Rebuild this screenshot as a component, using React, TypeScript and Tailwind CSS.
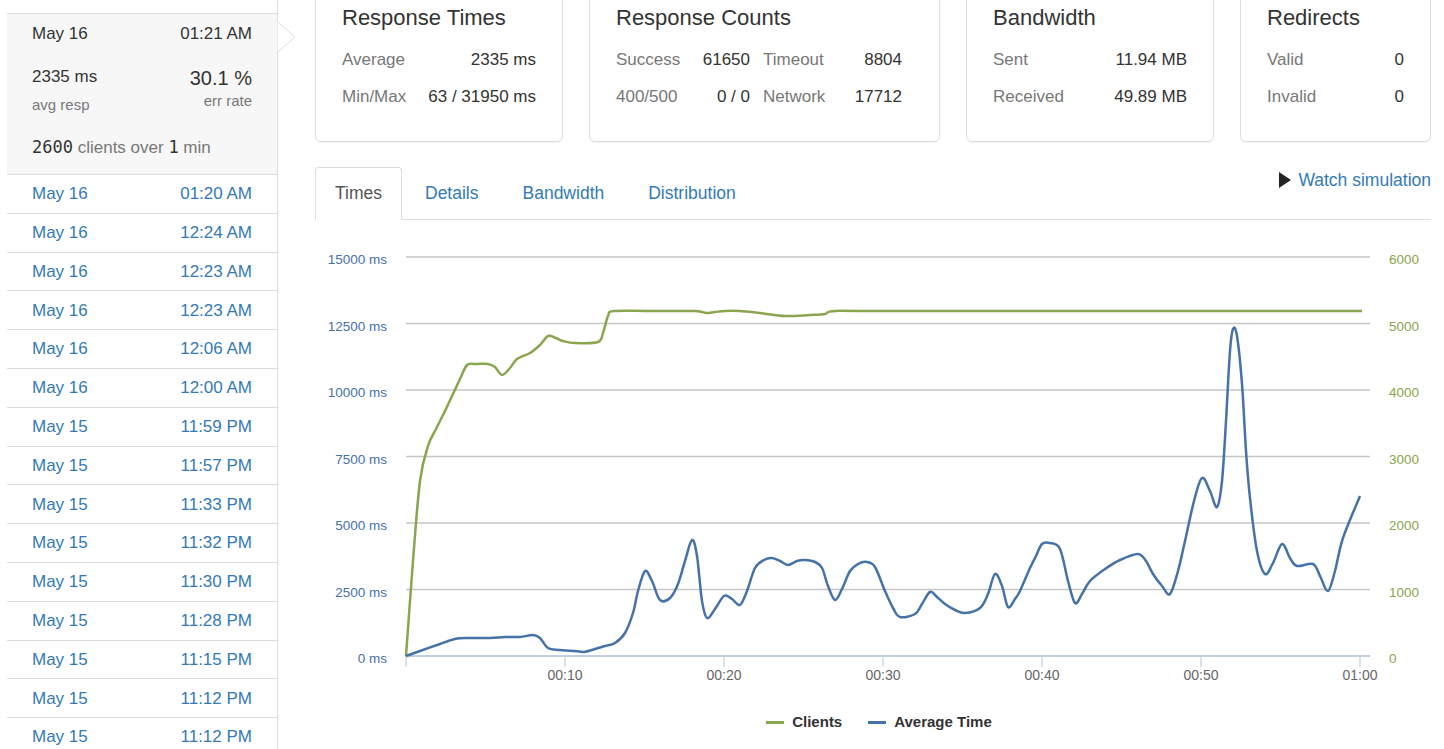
const runs = [
  ["May 16", "01:20 AM"],
  ["May 16", "12:24 AM"],
  ["May 16", "12:23 AM"],
  ["May 16", "12:23 AM"],
  ["May 16", "12:06 AM"],
  ["May 16", "12:00 AM"],
  ["May 15", "11:59 PM"],
  ["May 15", "11:57 PM"],
  ["May 15", "11:33 PM"],
  ["May 15", "11:32 PM"],
  ["May 15", "11:30 PM"],
  ["May 15", "11:28 PM"],
  ["May 15", "11:15 PM"],
  ["May 15", "11:12 PM"],
  ["May 15", "11:12 PM"],
];

const clients: [number, number][] = [
  [406, 655], [413, 560], [420, 480], [428, 445], [436, 428], [445, 410], [453, 393], [460, 378],
  [467, 364], [475, 363], [488, 363], [495, 366], [502, 374], [510, 367], [517, 358], [530, 352],
  [540, 344], [548, 335], [556, 337], [563, 340], [575, 342], [598, 341], [603, 332], [608, 315],
  [614, 310], [650, 310], [695, 310], [706, 312], [715, 311], [725, 310], [740, 310], [760, 312],
  [785, 315], [810, 314], [825, 313], [836, 310], [900, 310], [1362, 310],
];

const avgTime: [number, number][] = [
  [406, 655], [420, 650], [440, 643], [455, 638], [470, 637], [490, 637], [505, 636], [520, 636],
  [533, 634], [540, 637], [548, 647], [560, 649], [575, 650], [584, 651], [595, 648], [605, 645],
  [615, 642], [625, 632], [633, 612], [638, 590], [645, 570], [652, 580], [660, 599], [670, 597],
  [678, 583], [685, 560], [692, 539], [697, 555], [702, 600], [707, 617], [715, 608], [724, 595],
  [732, 598], [740, 604], [747, 590], [755, 567], [764, 559], [772, 557], [780, 560], [788, 564],
  [797, 560], [805, 559], [815, 561], [822, 567], [828, 585], [835, 599], [842, 588], [850, 570],
  [858, 563], [867, 561], [875, 566], [885, 590], [893, 607], [900, 616], [915, 613], [922, 603],
  [930, 591], [937, 596], [945, 603], [955, 609], [965, 612], [980, 607], [988, 593], [995, 573],
  [1002, 585], [1008, 606], [1015, 598], [1020, 590], [1030, 567], [1036, 555], [1042, 543],
  [1050, 542], [1060, 548], [1068, 580], [1075, 602], [1082, 593], [1090, 580], [1105, 568],
  [1120, 559], [1138, 553], [1146, 560], [1153, 573], [1162, 585], [1170, 593], [1178, 570],
  [1185, 540], [1194, 500], [1202, 477], [1210, 490], [1217, 506], [1222, 480], [1226, 420],
  [1230, 350], [1233, 328], [1237, 335], [1242, 383], [1246, 450], [1250, 497], [1257, 550],
  [1265, 573], [1273, 562], [1282, 543], [1290, 557], [1297, 565], [1313, 563], [1320, 575],
  [1328, 590], [1335, 570], [1343, 537], [1360, 495],
];

// catmull-rom -> cubic bezier
function smooth(pts: [number, number][]) {
  let d = `M${pts[0][0]},${pts[0][1]}`;
  for (let i = 0; i < pts.length - 1; i++) {
    const p0 = pts[i - 1] || pts[i];
    const p1 = pts[i];
    const p2 = pts[i + 1];
    const p3 = pts[i + 2] || p2;
    const c1x = p1[0] + (p2[0] - p0[0]) / 6;
    const c1y = p1[1] + (p2[1] - p0[1]) / 6;
    const c2x = p2[0] - (p3[0] - p1[0]) / 6;
    const c2y = p2[1] - (p3[1] - p1[1]) / 6;
    d += ` C${c1x.toFixed(1)},${c1y.toFixed(1)} ${c2x.toFixed(1)},${c2y.toFixed(1)} ${p2[0]},${p2[1]}`;
  }
  return d;
}

const yTicks = [
  { ms: "15000 ms", n: "6000", y: 256 },
  { ms: "12500 ms", n: "5000", y: 322.5 },
  { ms: "10000 ms", n: "4000", y: 389 },
  { ms: "7500 ms", n: "3000", y: 455.5 },
  { ms: "5000 ms", n: "2000", y: 522 },
  { ms: "2500 ms", n: "1000", y: 588.5 },
  { ms: "0 ms", n: "0", y: 655 },
];

const xTicks = ["", "00:10", "00:20", "00:30", "00:40", "00:50", "01:00"];

function Chart() {
  return (
    <svg viewBox="315 219 1116 475" width={1116} height={475} className="block">
      {yTicks.slice(0, 6).map((t) => (
        <line key={t.y} x1={406} x2={1370} y1={t.y} y2={t.y} stroke="#c6c6c6" strokeWidth={1.5} />
      ))}
      <line x1={406} x2={1370} y1={655} y2={655} stroke="#c0d0e0" strokeWidth={2} />
      {xTicks.map((_, i) => (
        <line key={i} x1={406 + i * 159} x2={406 + i * 159} y1={655} y2={666} stroke="#c0d0e0" strokeWidth={1.2} />
      ))}
      {yTicks.map((t) => (
        <g key={t.ms} fontFamily="Liberation Sans, Arial, sans-serif" fontSize={13.5}>
          <text x={387} y={t.y + 7} textAnchor="end" fill="#4572a7">{t.ms}</text>
          <text x={1389} y={t.y + 7} fill="#89a54e">{t.n}</text>
        </g>
      ))}
      {xTicks.map((l, i) =>
        l ? (
          <text key={l} x={406 + i * 159} y={679} textAnchor="middle" fill="#666" fontSize={14} fontFamily="Liberation Sans, Arial, sans-serif">
            {l}
          </text>
        ) : null
      )}
      <path d={smooth(clients)} fill="none" stroke="#89a54e" strokeWidth={2.5} strokeLinejoin="round" />
      <path d={smooth(avgTime)} fill="none" stroke="#4572a7" strokeWidth={2.5} strokeLinejoin="round" />
    </svg>
  );
}

function Card({ title, width, children }: { title: string; width: string; children: React.ReactNode }) {
  return (
    <div className={`${width} shrink-0 border border-[#ddd] rounded-[6px] pt-[13px] pb-[26px] px-[26px] shadow-[0_1px_1px_rgba(0,0,0,0.05)]`}>
      <h3 className="text-[22px] leading-[30px] text-[#333]">{title}</h3>
      <div className="mt-[8px]">{children}</div>
    </div>
  );
}

function Row({ label, value }: { label: string; value: string }) {
  return (
    <div className="flex justify-between leading-[37px] text-[17px]">
      <span className="text-[#777]">{label}</span>
      <span className="text-[#333]">{value}</span>
    </div>
  );
}

export default function App() {
  return (
    <div className="flex h-screen overflow-hidden bg-white font-['Liberation_Sans',Arial,sans-serif]">
      {/* sidebar */}
      <div className="relative ml-[7px] w-[271px] shrink-0 border-r border-[#ddd] pt-[13px]">
        <div className="relative border-t border-[#ddd] bg-[#f7f7f7] px-[25px] pt-[8px] pb-[14px] text-[#333]">
          <div className="flex justify-between text-[17px] leading-[24px]">
            <span>May 16</span>
            <span>01:21 AM</span>
          </div>
          <div className="flex justify-between mt-[19px]">
            <div>
              <div className="text-[17px] leading-[24px]">2335 ms</div>
              <div className="mt-[6px] text-[15px] leading-[20px] text-[#777]">avg resp</div>
            </div>
            <div className="text-right">
              <div className="text-[20px] leading-[26px]">30.1 %</div>
              <div className="text-[15px] leading-[20px] text-[#777]">err rate</div>
            </div>
          </div>
          <div className="mt-[21px] h-[24px] text-[17px] leading-[24px] text-[#777]">
            <span className="text-[#333] font-['DejaVu_Sans_Mono',monospace] text-[17px] leading-none">2600</span> clients over{" "}
            <span className="text-[#333] font-['DejaVu_Sans_Mono',monospace] text-[17px] leading-none">1</span> min
          </div>
        </div>
        {runs.map(([d, t], i) => (
          <div key={i} className="flex h-[38.8px] items-center justify-between border-t border-[#ddd] px-[25px] text-[17px] text-[#337ab7]">
            <span>{d}</span>
            <span>{t}</span>
          </div>
        ))}
        <svg className="absolute left-full top-[21px]" width={20} height={32} viewBox="0 0 20 32">
          <polygon points="0,0.5 18,16 0,31.5" fill="#fff" stroke="#ddd" strokeWidth={1} />
        </svg>
      </div>

      {/* main */}
      <div className="ml-[37px] w-[1116px] shrink-0">
        <div className="flex gap-[26px] -mt-[11px]">
          <Card title="Response Times" width="w-[248px]">
            <Row label="Average" value="2335 ms" />
            <Row label="Min/Max" value="63 / 31950 ms" />
          </Card>
          <Card title="Response Counts" width="w-[351px]">
            <div className="grid grid-cols-[80px_54px_87px_65px] text-[17px] leading-[37px]">
              <span className="text-[#777]">Success</span>
              <span className="text-right text-[#333]">61650</span>
              <span className="pl-[13px] text-[#777]">Timeout</span>
              <span className="text-right text-[#333]">8804</span>
              <span className="text-[#777]">400/500</span>
              <span className="text-right text-[#333]">0 / 0</span>
              <span className="pl-[13px] text-[#777]">Network</span>
              <span className="text-right text-[#333]">17712</span>
            </div>
          </Card>
          <Card title="Bandwidth" width="w-[248px]">
            <Row label="Sent" value="11.94 MB" />
            <Row label="Received" value="49.89 MB" />
          </Card>
          <Card title="Redirects" width="w-[191px]">
            <Row label="Valid" value="0" />
            <Row label="Invalid" value="0" />
          </Card>
        </div>

        <div className="mt-[25px] flex border-b border-[#ddd] text-[17.5px]">
          <div className="-mb-px rounded-t-[4px] border border-[#ddd] border-b-white bg-white px-[19px] py-[13px] leading-[24px] text-[#555]">
            Times
          </div>
          {["Details", "Bandwidth", "Distribution"].map((t) => (
            <div key={t} className="ml-[2px] border border-transparent px-[20px] py-[13px] leading-[24px] text-[#337ab7]">
              {t}
            </div>
          ))}
          <div className="ml-auto mt-[1px] self-start flex items-center gap-[6px] leading-[24px] text-[#337ab7]">
            <svg width={14} height={18} viewBox="0 0 14 18">
              <polygon points="1,1 13,9 1,17" fill="#222" />
            </svg>
            Watch simulation
          </div>
        </div>

        <Chart />

        <div className="mt-[17px] flex justify-center gap-[26px] pl-[12px] text-[15px] font-bold leading-[20px] text-[#333]">
          <div className="flex items-center gap-[8px]">
            <span className="block h-[3px] w-[18px] bg-[#89a54e]" />
            Clients
          </div>
          <div className="flex items-center gap-[8px]">
            <span className="block h-[3px] w-[18px] bg-[#4572a7]" />
            Average Time
          </div>
        </div>
      </div>
    </div>
  );
}
